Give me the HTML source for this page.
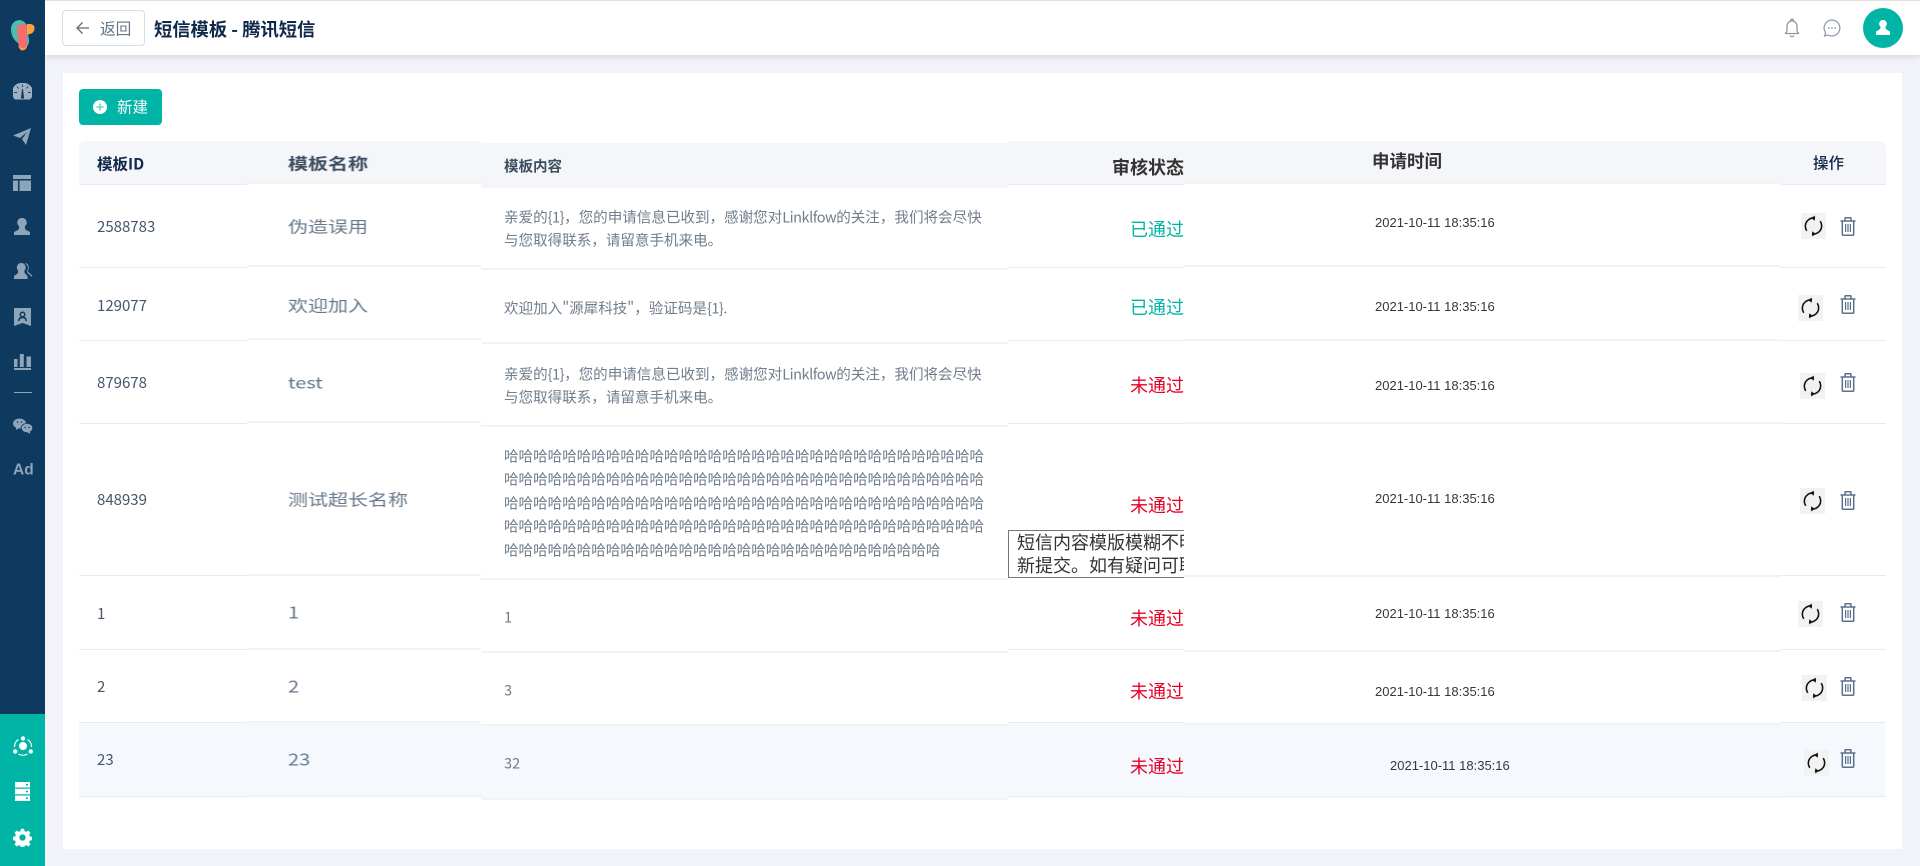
<!DOCTYPE html>
<html lang="zh-CN"><head><meta charset="utf-8"><title>短信模板</title>
<style>
*{box-sizing:border-box}
html,body{margin:0;padding:0}
body{width:1920px;height:866px;overflow:hidden;background:#f1f3f8;position:relative;font-family:"Liberation Sans","Noto Sans CJK SC",sans-serif;color:#3a4a5e}
.a{position:absolute}
.t{position:absolute;white-space:nowrap;transform:translateY(-50%);line-height:1.2}
.cjk{font-family:"Noto Sans CJK SC",sans-serif}
.id{left:97px;font-size:15px;color:#45566b;font-family:"Noto Sans CJK SC",sans-serif}
.nm{left:288px;font-size:16px;color:#66778a;transform-origin:0 50%;transform:translateY(-50%) scaleX(1.25);filter:blur(.35px);font-family:"Noto Sans CJK SC",sans-serif}
.ct{left:504px;font-size:14.55px;color:#6f7d8c;line-height:23.4px;filter:blur(.3px);font-family:"Noto Sans CJK SC",sans-serif}
.ct i{font-style:normal;letter-spacing:-.5px}
.st{right:736px;font-size:18px;font-weight:400;font-family:"Noto Sans CJK SC",sans-serif}
.ok{color:#00b4a6}.no{color:#e60026}
.tm{left:1375px;font-size:13px;color:#33383e}
.hl{height:1px;background:#e8eaee}
.hb{height:2px;background:#f2f3f5}
.sync{position:absolute;width:25px;height:26px;background:#f2f2f2}
.sync svg{position:absolute;left:2px;top:2px;width:21px;height:22px}
.tr{position:absolute;left:1840px;width:16px;height:19px}
.nav{position:absolute;left:13px;width:18px;height:18px;fill:#8ea4b9}
</style></head><body>
<svg width="0" height="0" style="position:absolute"><defs>
<symbol id="s" viewBox="0 0 20 20"><g fill="none" stroke="#111" stroke-width="1.5"><path d="M11.5 2.500A7.800 7.800 0 0 0 3.600 14.600"/><path d="M8.500 17.500A7.800 7.800 0 0 0 16.400 5.400"/></g><path d="M11.200 0v5L7.800 2.500zM8.800 15v5l3.400-2.500z" fill="#111"/></symbol>
<symbol id="d" viewBox="0 0 16 19"><g fill="none" stroke="#5a708a" stroke-width="1.500"><path d="M.5 4h15M2.300 4v13.200q0 1 1 1h9.400q1 0 1-1V4M5 3.800V1.500q0-.8.8-.8h4.400q.8 0 .8.8v2.300"/><path d="M5.600 7v8M8 7v8M10.400 7v8" stroke-width="1.200"/></g></symbol>
</defs></svg>

<!-- sidebar -->
<div class="a" style="left:0;top:0;width:45px;height:866px;background:#0e3a60"></div>
<div class="a" style="left:0;top:714px;width:45px;height:152px;background:#00b4a6"></div>
<svg class="a" style="left:10px;top:19px;filter:blur(.3px)" width="26" height="32" viewBox="0 0 26 32"><path d="M4 3q3-2 6-2 5 1 7 6l2 14q0 5-2 6-5 1-9-3Q1 19 1 10q0-4 3-7z" fill="#46bfae"/><path d="M7 9q1-4 5-4l5 1v21q-1 3-5 4-3-2-4-8z" fill="#f76d6d"/><path d="M12 5h9q4 1 3.500 5-.5 4-4.500 5l-3 .5V5z" fill="#f9a23f"/><path d="M8 26q3 4 7 3l2-3v2q-1 3-5 3.500-3-1-4-5.500z" fill="#f9a23f"/></svg>
<svg class="a" style="left:13px;top:83px" width="19" height="17" viewBox="0 0 19 17"><path d="M9.500 0A9.500 9.500 0 0 0 2 16.500h15A9.500 9.500 0 0 0 9.500 0z" fill="#9db0c4"/><path d="M9.500 6l1.100 9H8.400zM9.500 1.500v2.500M4 3.500l1.500 2M15 3.500l-1.500 2M1.500 9.500H4M17.500 9.500H15" stroke="#0e3a60" stroke-width=".9" fill="#0e3a60"/></svg>
<svg class="nav" style="top:128px" viewBox="0 0 18 18"><path d="M0 7.500 18 0l-5 17-4-6 5-7-7 6z"/></svg>
<svg class="nav" style="top:174px" viewBox="0 0 18 18"><path d="M0 1h18v4H0zM0 6.500h5V17H0zM6.500 6.500H18V17H6.500z"/></svg>
<svg class="nav" style="top:218px" viewBox="0 0 18 18"><path d="M9 0a4.500 4.500 0 0 1 3 8q-.5 3 1 4l4 2v3H1v-3l4-2q1.500-1 1-4a4.500 4.500 0 0 1 3-8z"/></svg>
<svg class="a" style="left:13px;top:262px" width="20" height="18" viewBox="0 0 20 18" fill="#8ea4b9"><path d="M8.500 1a4.500 4.500 0 0 1 3 7.500q-.5 2.500 1 3.500l2 2v3H1v-3l3-2q1.500-1 1-3.500a4.500 4.500 0 0 1 3.500-7.500z"/><path d="M12.500 1q4 1 3 6-1 2 0 3l4 4-.8.800-4-3.800q-1-1.500 0-3.500 1-4-2.200-5.500z"/></svg>
<svg class="a" style="left:14px;top:308px" width="17" height="18" viewBox="0 0 17 18" fill="#8ea4b9"><path fill-rule="evenodd" d="M0 0h17v18l-8.500-3L0 18zM8.500 3.500a3 3 0 0 0-2 5.200Q4 10 4 13h1.500q0-2.800 3-2.800t3 2.800H13q0-3-2.500-4.300a3 3 0 0 0-2-5.200zm0 1.500a1.500 1.500 0 1 1 0 3 1.500 1.500 0 0 1 0-3z"/></svg>
<svg class="a" style="left:14px;top:353px" width="17" height="18" viewBox="0 0 17 18" fill="#8ea4b9"><path d="M0 6h3.500v8H0zM5.800 1h4v13h-4zM12.500 3.500H17V14h-4.500zM0 15h17v2H0z"/></svg>
<div class="a" style="left:14px;top:392px;width:18px;height:1px;background:#8ea4b9"></div>
<svg class="a" style="left:13px;top:418px" width="20" height="16" viewBox="0 0 20 16" fill="#8ea4b9"><ellipse cx="6.500" cy="5.500" rx="6.500" ry="5"/><path d="M3 9v3l3-2z"/><ellipse cx="14" cy="10" rx="5.800" ry="4.600" stroke="#0e3a60" stroke-width=".8"/><path d="M17 13v3l-3-2z"/><g fill="#0e3a60"><circle cx="4.500" cy="4" r=".8"/><circle cx="8.500" cy="4" r=".8"/><circle cx="12" cy="9.500" r=".7"/><circle cx="16" cy="9.500" r=".7"/></g></svg>
<div class="t" style="left:13px;top:471px;font-size:15.500px;font-weight:700;color:#8ea4b9">Ad</div>
<svg class="a" style="left:13px;top:736px" width="20" height="20" viewBox="0 0 20 20" fill="#fff"><circle cx="10" cy="10" r="4"/><circle cx="10" cy="2.500" r="2.200"/><circle cx="2.200" cy="15.500" r="2.200"/><circle cx="17.800" cy="15.500" r="2.200"/><g fill="none" stroke="#fff" stroke-width="1.200"><path d="M5.500 3.500A8.500 8.500 0 0 0 1.500 11M14.500 3.500a8.500 8.500 0 0 1 4 7.500M5.500 18a9 9 0 0 0 9 0"/></g></svg>
<svg class="a" style="left:15px;top:782px" width="15" height="19" viewBox="0 0 15 19" fill="#fff"><path fill-rule="evenodd" d="M0 0h15v5.500H0zM11 2v1.500h2V2zM0 6.700h15v5.500H0zM11 8.700v1.500h2V8.700zM0 13.500h15V19H0zM11 15.500V17h2v-1.500z"/></svg>
<svg class="a" style="left:13px;top:828px" width="19" height="19" viewBox="0 0 24 24" fill="#fff"><path fill-rule="evenodd" d="M10 1h4l.6 3 2.200.9 2.500-1.700 2.800 2.800-1.700 2.500.9 2.200 3 .6v4l-3 .6-.9 2.200 1.700 2.500-2.800 2.800-2.500-1.700-2.200.9-.6 3h-4l-.6-3-2.200-.9-2.500 1.700-2.800-2.800 1.700-2.500-.9-2.200-3-.6v-4l3-.6.9-2.200L1.900 6l2.800-2.800 2.500 1.700L9.400 4zM12 8a4 4 0 1 0 0 8 4 4 0 0 0 0-8z"/></svg>

<!-- header -->
<div class="a" style="left:45px;top:0;width:1875px;height:55px;background:#fff;border-top:1px solid #dfdfdf;box-shadow:0 2px 6px rgba(60,70,90,.16)"></div>
<div class="a" style="left:62px;top:10px;width:83px;height:36px;border:1px solid #d5dce6;border-radius:4px;background:#fff"></div>
<svg class="a" style="left:76px;top:21px" width="14" height="14" viewBox="0 0 14 14" fill="none" stroke="#5e6e82" stroke-width="1.300"><path d="M13 7H1.500M6.500 1.500 1 7l5.500 5.500"/></svg>
<div class="t cjk" style="left:100px;top:29px;font-size:15.700px;color:#66758a">返回</div>
<div class="t cjk" style="left:154px;top:29.500px;font-size:18.300px;font-weight:700;color:#10284a">短信模板 - 腾讯短信</div>
<svg class="a" style="left:1784px;top:18px" width="16" height="20" viewBox="0 0 16 20" fill="none" stroke="#8b99aa" stroke-width="1.300"><path d="M1 15.500q2-1 2-4V8a5 5 0 0 1 10 0v3.500q0 3 2 4zM6.500 3q0-2 1.500-2t1.500 2M6 17.500q2 2.500 4 0"/></svg>
<svg class="a" style="left:1823px;top:19px" width="18" height="18" viewBox="0 0 18 18"><path d="M9 1a8 8 0 1 1-4 15l-3.500 1 1-3.500A8 8 0 0 1 9 1z" fill="none" stroke="#8b99aa" stroke-width="1.200"/><g fill="#8b99aa"><circle cx="5.700" cy="9" r=".9"/><circle cx="9" cy="9" r=".9"/><circle cx="12.300" cy="9" r=".9"/></g></svg>
<div class="a" style="left:1863px;top:8px;width:40px;height:40px;border-radius:50%;background:#00b4a6"></div>
<svg class="a" style="left:1876px;top:20px" width="14" height="15" viewBox="0 0 14 15" fill="#fff"><path d="M7 0a3.800 3.800 0 0 1 2.500 6.700q-.3 2 1 2.800l3.500 2V15H0v-3.500l3.500-2q1.300-.8 1-2.800A3.800 3.800 0 0 1 7 0z"/></svg>

<!-- card -->
<div class="a" style="left:63px;top:73px;width:1839px;height:776px;background:#fff"></div>
<div class="a" style="left:79px;top:89px;width:83px;height:36px;background:#00b4a6;border-radius:4px"></div>
<svg class="a" style="left:93px;top:100px" width="14" height="14" viewBox="0 0 14 14"><circle cx="7" cy="7" r="7" fill="#fff"/><path d="M7 3.500v7M3.500 7h7" stroke="#7fd9d2" stroke-width="1.800"/></svg>
<div class="t cjk" style="left:117px;top:107px;font-size:15.500px;color:#fff">新建</div>

<!-- table header bands -->
<div class="a" style="left:79px;top:141px;width:168px;height:43px;background:#f5f6fa;border-top-left-radius:6px"></div>
<div class="a" style="left:247px;top:141px;width:234px;height:42px;background:#f5f6fa"></div>
<div class="a" style="left:481px;top:143px;width:527px;height:45px;background:#f5f6fa"></div>
<div class="a" style="left:1008px;top:141px;width:176px;height:43px;background:#f5f6fa"></div>
<div class="a" style="left:1184px;top:141px;width:597px;height:42px;background:#f5f6fa"></div>
<div class="a" style="left:1781px;top:141px;width:105px;height:43px;background:#f5f6fa;border-top-right-radius:6px"></div>

<!-- highlighted row -->
<div class="a" style="left:79px;top:722px;width:402px;height:74px;background:#f5f9fd"></div>
<div class="a" style="left:481px;top:725px;width:527px;height:73px;background:#f5f9fd"></div>
<div class="a" style="left:1008px;top:722px;width:176px;height:74px;background:#f5f9fd"></div>
<div class="a" style="left:1184px;top:724px;width:597px;height:73px;background:#f5f9fd"></div>
<div class="a" style="left:1781px;top:722px;width:105px;height:74px;background:#f5f9fd"></div>

<!-- row lines: ID col & name col -->
<div class="a hl" style="left:79px;width:168px;top:184px"></div>
<div class="a hl" style="left:79px;width:168px;top:267px"></div>
<div class="a hl" style="left:79px;width:168px;top:340px"></div>
<div class="a hl" style="left:79px;width:168px;top:423px"></div>
<div class="a hl" style="left:79px;width:168px;top:575px"></div>
<div class="a hl" style="left:79px;width:168px;top:649px"></div>
<div class="a hl" style="left:79px;width:168px;top:722px"></div>
<div class="a hl" style="left:79px;width:168px;top:796px"></div>
<div class="a hb" style="left:247px;width:234px;top:182px"></div>
<div class="a hb" style="left:247px;width:234px;top:265px"></div>
<div class="a hb" style="left:247px;width:234px;top:338px"></div>
<div class="a hb" style="left:247px;width:234px;top:421px"></div>
<div class="a hb" style="left:247px;width:234px;top:574px"></div>
<div class="a hb" style="left:247px;width:234px;top:648px"></div>
<div class="a hb" style="left:247px;width:234px;top:721px"></div>
<div class="a hb" style="left:247px;width:234px;top:795px"></div>
<!-- content col -->
<div class="a hb" style="left:481px;width:527px;top:268px"></div>
<div class="a hb" style="left:481px;width:527px;top:342px"></div>
<div class="a hb" style="left:481px;width:527px;top:425px"></div>
<div class="a hb" style="left:481px;width:527px;top:578px"></div>
<div class="a hb" style="left:481px;width:527px;top:651px"></div>
<div class="a hb" style="left:481px;width:527px;top:724px"></div>
<div class="a hb" style="left:481px;width:527px;top:798px"></div>
<!-- status col -->
<div class="a hl" style="left:1008px;width:176px;top:184px"></div>
<div class="a hl" style="left:1008px;width:176px;top:267px"></div>
<div class="a hl" style="left:1008px;width:176px;top:340px"></div>
<div class="a hl" style="left:1008px;width:176px;top:423px"></div>
<div class="a hl" style="left:1008px;width:176px;top:577px"></div>
<div class="a hl" style="left:1008px;width:176px;top:649px"></div>
<div class="a hl" style="left:1008px;width:176px;top:722px"></div>
<div class="a hl" style="left:1008px;width:176px;top:796px"></div>
<!-- time col -->
<div class="a hb" style="left:1184px;width:597px;top:182px"></div>
<div class="a hb" style="left:1184px;width:597px;top:265px"></div>
<div class="a hb" style="left:1184px;width:597px;top:339px"></div>
<div class="a hb" style="left:1184px;width:597px;top:422px"></div>
<div class="a hb" style="left:1184px;width:597px;top:575px"></div>
<div class="a hb" style="left:1184px;width:597px;top:650px"></div>
<div class="a hb" style="left:1184px;width:597px;top:723px"></div>
<div class="a hb" style="left:1184px;width:597px;top:796px"></div>
<!-- ops col -->
<div class="a hl" style="left:1781px;width:105px;top:184px"></div>
<div class="a hl" style="left:1781px;width:105px;top:267px"></div>
<div class="a hl" style="left:1781px;width:105px;top:340px"></div>
<div class="a hl" style="left:1781px;width:105px;top:423px"></div>
<div class="a hl" style="left:1781px;width:105px;top:575px"></div>
<div class="a hl" style="left:1781px;width:105px;top:649px"></div>
<div class="a hl" style="left:1781px;width:105px;top:722px"></div>
<div class="a hl" style="left:1781px;width:105px;top:796px"></div>

<!-- header text -->
<div class="t cjk" style="left:97px;top:164px;font-size:15.500px;font-weight:700;color:#10284a">模板ID</div>
<div class="t cjk" style="left:288px;top:163px;font-size:16px;font-weight:700;color:#3d4d60;transform-origin:0 50%;transform:translateY(-50%) scaleX(1.25);filter:blur(.35px)">模板名称</div>
<div class="t cjk" style="left:504px;top:166px;font-size:14.500px;font-weight:700;color:#3d4d60;filter:blur(.3px)">模板内容</div>
<div class="t cjk" style="right:736px;top:168px;font-size:18px;font-weight:700;color:#333">审核状态</div>
<div class="t cjk" style="left:1372px;top:161px;font-size:17.500px;font-weight:700;color:#333">申请时间</div>
<div class="t cjk" style="left:1813px;top:163px;font-size:15.500px;color:#10284a;font-weight:500">操作</div>

<!-- ids -->
<div class="t id" style="top:227px">2588783</div>
<div class="t id" style="top:306px">129077</div>
<div class="t id" style="top:383px">879678</div>
<div class="t id" style="top:500px">848939</div>
<div class="t id" style="top:614px">1</div>
<div class="t id" style="top:687px">2</div>
<div class="t id" style="top:760px">23</div>

<!-- names -->
<div class="t nm" style="top:226px">伪造误用</div>
<div class="t nm" style="top:305px">欢迎加入</div>
<div class="t nm" style="top:382px">test</div>
<div class="t nm" style="top:499px">测试超长名称</div>
<div class="t nm" style="top:612px">1</div>
<div class="t nm" style="top:686px">2</div>
<div class="t nm" style="top:759px">23</div>

<!-- content -->
<div class="t ct" style="top:229px">亲爱的<i>{1}</i>，您的申请信息已收到，感谢您对<i>Linklfow</i>的关注，我们将会尽快<br>与您取得联系，请留意手机来电。</div>
<div class="t ct" style="top:308px">欢迎加入"源犀科技"，验证码是<i>{1}.</i></div>
<div class="t ct" style="top:386px">亲爱的<i>{1}</i>，您的申请信息已收到，感谢您对<i>Linklfow</i>的关注，我们将会尽快<br>与您取得联系，请留意手机来电。</div>
<div class="t ct" style="top:503px">哈哈哈哈哈哈哈哈哈哈哈哈哈哈哈哈哈哈哈哈哈哈哈哈哈哈哈哈哈哈哈哈哈<br>哈哈哈哈哈哈哈哈哈哈哈哈哈哈哈哈哈哈哈哈哈哈哈哈哈哈哈哈哈哈哈哈哈<br>哈哈哈哈哈哈哈哈哈哈哈哈哈哈哈哈哈哈哈哈哈哈哈哈哈哈哈哈哈哈哈哈哈<br>哈哈哈哈哈哈哈哈哈哈哈哈哈哈哈哈哈哈哈哈哈哈哈哈哈哈哈哈哈哈哈哈哈<br>哈哈哈哈哈哈哈哈哈哈哈哈哈哈哈哈哈哈哈哈哈哈哈哈哈哈哈哈哈哈</div>
<div class="t ct" style="top:617px">1</div>
<div class="t ct" style="top:690px">3</div>
<div class="t ct" style="top:763px">32</div>

<!-- status -->
<div class="t st ok" style="top:230px">已通过</div>
<div class="t st ok" style="top:308px">已通过</div>
<div class="t st no" style="top:386px">未通过</div>
<div class="t st no" style="top:506px">未通过</div>
<div class="t st no" style="top:619px">未通过</div>
<div class="t st no" style="top:692px">未通过</div>
<div class="t st no" style="top:767px">未通过</div>

<!-- tooltip -->
<div class="a" style="left:1008px;top:530px;width:176px;height:48px;overflow:hidden"><div style="position:absolute;left:0;top:0;width:300px;height:48px;border:1px solid #767676;background:#fff;padding:0 8px;font:18px/23px 'WenQuanYi Zen Hei','Noto Sans CJK SC',sans-serif;color:#333;white-space:nowrap">短信内容模版模糊不明确，请重<br>新提交。如有疑问可联系客服</div></div>

<!-- times -->
<div class="t tm" style="top:222.500px">2021-10-11 18:35:16</div>
<div class="t tm" style="top:307px">2021-10-11 18:35:16</div>
<div class="t tm" style="top:385.500px">2021-10-11 18:35:16</div>
<div class="t tm" style="top:498.500px">2021-10-11 18:35:16</div>
<div class="t tm" style="top:614px">2021-10-11 18:35:16</div>
<div class="t tm" style="top:691.500px">2021-10-11 18:35:16</div>
<div class="t tm" style="top:765.500px;left:1390px">2021-10-11 18:35:16</div>

<!-- ops -->
<div class="sync" style="left:1801px;top:213px"><svg><use href="#s"/></svg></div>
<div class="sync" style="left:1798px;top:295px"><svg><use href="#s"/></svg></div>
<div class="sync" style="left:1800px;top:373px"><svg><use href="#s"/></svg></div>
<div class="sync" style="left:1800px;top:488px"><svg><use href="#s"/></svg></div>
<div class="sync" style="left:1798px;top:601px"><svg><use href="#s"/></svg></div>
<div class="sync" style="left:1802px;top:675px"><svg><use href="#s"/></svg></div>
<div class="sync" style="left:1804px;top:750px"><svg><use href="#s"/></svg></div>
<svg class="tr" style="top:217px"><use href="#d"/></svg>
<svg class="tr" style="top:295px"><use href="#d"/></svg>
<svg class="tr" style="top:373px"><use href="#d"/></svg>
<svg class="tr" style="top:491px"><use href="#d"/></svg>
<svg class="tr" style="top:603px"><use href="#d"/></svg>
<svg class="tr" style="top:677px"><use href="#d"/></svg>
<svg class="tr" style="top:749px"><use href="#d"/></svg>
</body></html>
